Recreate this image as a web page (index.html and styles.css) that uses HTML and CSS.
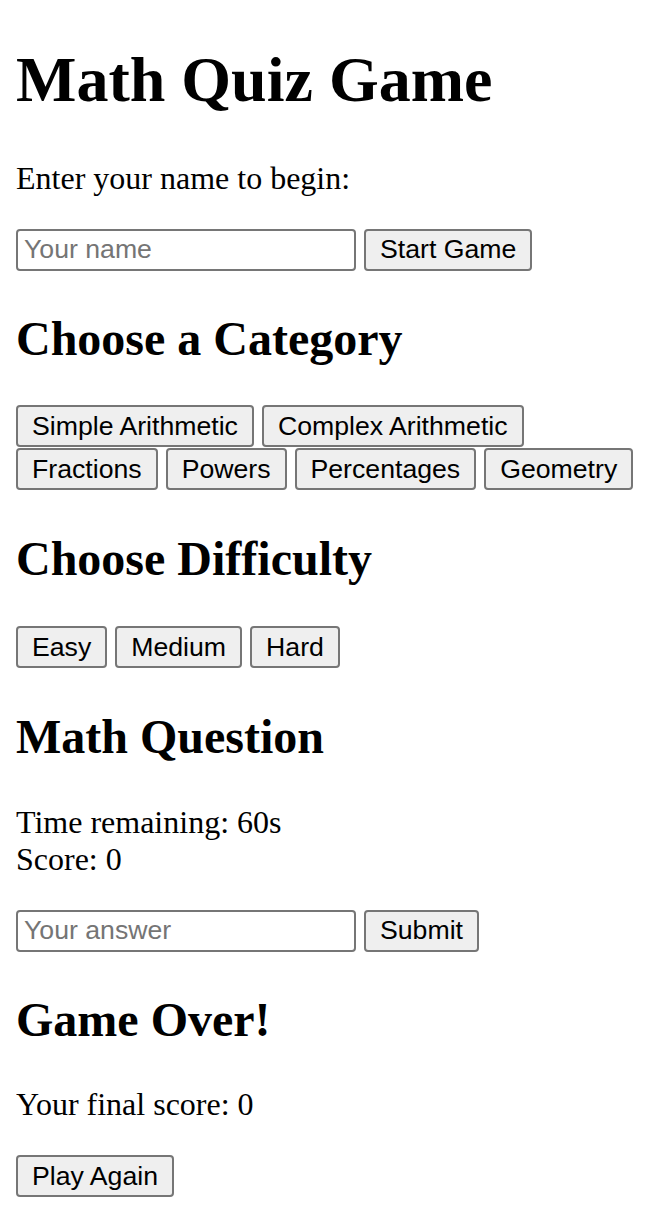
FILE: index.html
```html
<!DOCTYPE html>
<html lang="en">
<head>
<meta charset="utf-8">
<title>Math Quiz Game</title>
<link rel="stylesheet" href="styles.css">
</head>
<body>
<div class="section">
  <h1 class="title">Math Quiz Game</h1>
  <p class="text">Enter your name to begin:</p>
  <div class="row">
    <input class="field" type="text" placeholder="Your name"> <button class="btn">Start Game</button>
  </div>
</div>
<div class="section">
  <h2 class="heading">Choose a Category</h2>
  <div class="buttons">
    <button class="btn">Simple Arithmetic</button> <button class="btn">Complex Arithmetic</button> <button class="btn">Fractions</button> <button class="btn">Powers</button> <button class="btn">Percentages</button> <button class="btn">Geometry</button>
  </div>
</div>
<div class="section">
  <h2 class="heading">Choose Difficulty</h2>
  <div class="buttons">
    <button class="btn">Easy</button> <button class="btn">Medium</button> <button class="btn">Hard</button>
  </div>
</div>
<div class="section">
  <h2 class="heading">Math Question</h2>
  <p class="text">Time remaining: 60s<br>Score: 0</p>
  <div class="row">
    <input class="field" type="text" placeholder="Your answer"> <button class="btn">Submit</button>
  </div>
</div>
<div class="section">
  <h2 class="heading">Game Over!</h2>
  <p class="text">Your final score: 0</p>
  <div class="row">
    <button class="btn">Play Again</button>
  </div>
</div>
</body>
</html>
```

FILE: styles.css
```css
html {
  background: #fff;
}
body {
  margin: 0 16px 16px;
  font-family: "Liberation Serif", "Times New Roman", serif;
  font-size: 32px;
  color: #000;
}
.title {
  font-size: 64px;
  font-weight: bold;
  margin: 42.88px 0;
}
.heading {
  font-size: 48px;
  font-weight: bold;
  margin: 39.84px 0;
}
.text {
  margin: 32px 0;
}
.field {
  box-sizing: border-box;
  width: 340px;
  height: 42px;
  font-family: "Liberation Sans", Arial, sans-serif;
  font-size: 26.67px;
  padding: 4px 6px;
  border: 2px solid #767676;
  border-radius: 4px;
  background: #fff;
  color: #000;
  margin: 0;
  vertical-align: top;
}
.field::placeholder {
  color: #757575;
}
.btn {
  box-sizing: border-box;
  height: 42px;
  font-family: "Liberation Sans", Arial, sans-serif;
  font-size: 26.67px;
  padding: 0 14px;
  border: 2px solid #767676;
  border-radius: 4px;
  background: #efefef;
  color: #000;
  margin: 0;
  vertical-align: top;
}
.buttons {
  line-height: 43px;
}
.buttons .btn {
  margin-bottom: 1px;
}
```
